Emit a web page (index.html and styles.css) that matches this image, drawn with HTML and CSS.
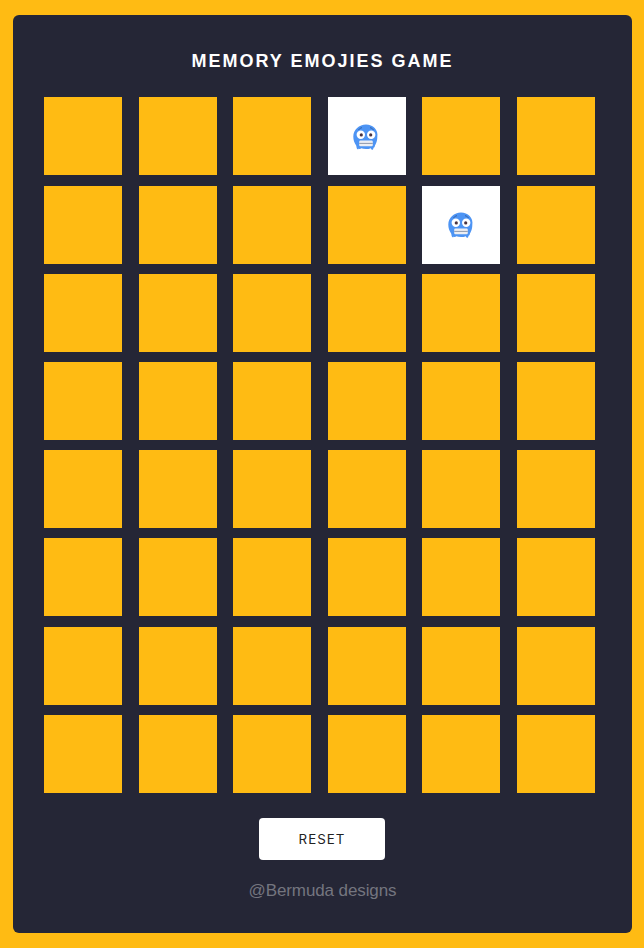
FILE: index.html
```html
<!DOCTYPE html>
<html lang="en">
<head>
<meta charset="utf-8">
<title>Memory Emojies Game</title>
<link rel="stylesheet" href="styles.css">
</head>
<body>
<svg class="defs" width="0" height="0" aria-hidden="true">
  <symbol id="cold" viewBox="0 0 28 28">
    <path d="M14 1.500C7.200 1.500 1.300 6.800 1.300 13.500c0 3.400 1 6.300 2.700 8.700.5.700.5 3.200 1.200 3.900.6.500 1.300.1 1.600-.7.700.8 1.700.8 2.300-.1 1.500.5 3.100.8 4.900.8 1.800 0 3.400-.2 4.900-.8.300 1.500 1.500 2 2.200 1 .3-.5.300-1 .4-1.600.7.100 1.100-.6 1.300-1.400.2-.7.300-1.300.7-1.800 1.200-2.200 1.800-4.700 1.800-7.500C26.700 6.800 20.800 1.500 14 1.500z" fill="#4d94f4"/>
    <path d="M6.500 6.900c1-1.300 2.200-2 3.500-2.200M21.500 6.900c-1-1.300-2.200-2-3.500-2.200" fill="none" stroke="#2f5a9c" stroke-width=".9"/>
    <circle cx="8.800" cy="11.700" r="4.200" fill="#fff"/>
    <circle cx="19.200" cy="11.700" r="4.200" fill="#fff"/>
    <circle cx="9.300" cy="11.900" r="1.600" fill="#4a3340"/>
    <circle cx="18.700" cy="11.900" r="1.600" fill="#4a3340"/>
    <rect x="7.200" y="17.600" width="13.600" height="5.600" rx="1.200" fill="#eceef3"/>
    <path d="M7.200 20.400h13.600" stroke="#8f98ab" stroke-width="1"/>
  </symbol>
</svg>
<main class="panel">
  <h1 class="title">MEMORY EMOJIES GAME</h1>
  <div class="board">
    <div class="card"></div><div class="card"></div><div class="card"></div>
    <div class="card open"><svg class="emoji"><use href="#cold"/></svg></div>
    <div class="card"></div><div class="card"></div>

    <div class="card"></div><div class="card"></div><div class="card"></div>
    <div class="card"></div>
    <div class="card open"><svg class="emoji"><use href="#cold"/></svg></div>
    <div class="card"></div>

    <div class="card"></div><div class="card"></div><div class="card"></div><div class="card"></div><div class="card"></div><div class="card"></div>
    <div class="card"></div><div class="card"></div><div class="card"></div><div class="card"></div><div class="card"></div><div class="card"></div>
    <div class="card"></div><div class="card"></div><div class="card"></div><div class="card"></div><div class="card"></div><div class="card"></div>
    <div class="card"></div><div class="card"></div><div class="card"></div><div class="card"></div><div class="card"></div><div class="card"></div>
    <div class="card"></div><div class="card"></div><div class="card"></div><div class="card"></div><div class="card"></div><div class="card"></div>
    <div class="card"></div><div class="card"></div><div class="card"></div><div class="card"></div><div class="card"></div><div class="card"></div>
  </div>
  <button class="reset" type="button">RESET</button>
  <p class="credit">@Bermuda designs</p>
</main>
</body>
</html>
```
FILE: styles.css
```css
* { box-sizing: border-box; }
html, body { height: 100%; }
body {
  margin: 0;
  padding: 15px 12px 15px 13px;
  background: #ffbb13;
  overflow: hidden;
}
.defs { position: absolute; }
.panel {
  height: 918px;
  background: #252636;
  border-radius: 6px;
  display: flex;
  flex-direction: column;
  align-items: center;
  padding-top: 36px;
}
.title {
  margin: 0;
  font: bold 18px/20px "Liberation Sans", Arial, sans-serif;
  letter-spacing: 2px;
  color: #fff;
  height: 46.4px;
}
.board {
  width: 551px;
  margin-right: 6px;
  display: grid;
  grid-template-columns: repeat(6, 78px);
  grid-auto-rows: 78px;
  justify-content: space-between;
  row-gap: 10.2px;
}
.card {
  background: #ffbb13;
  display: flex;
  align-items: center;
  justify-content: center;
}
.card.open { background: #fff; }
.emoji { width: 28px; height: 28px; margin-top: 1px; margin-right: 1px; }
.reset {
  margin-top: 25.5px;
  margin-right: 1px;
  width: 126px;
  height: 42px;
  border: 0;
  border-radius: 4px;
  background: #fff;
  color: #222;
  font: 13.33px "Inter", sans-serif;
  letter-spacing: 1px;
}
.credit {
  margin: 21px 0 0;
  font: 17px/20px "Liberation Sans", Arial, sans-serif;
  color: #74757f;
  letter-spacing: -0.1px;
}
```
